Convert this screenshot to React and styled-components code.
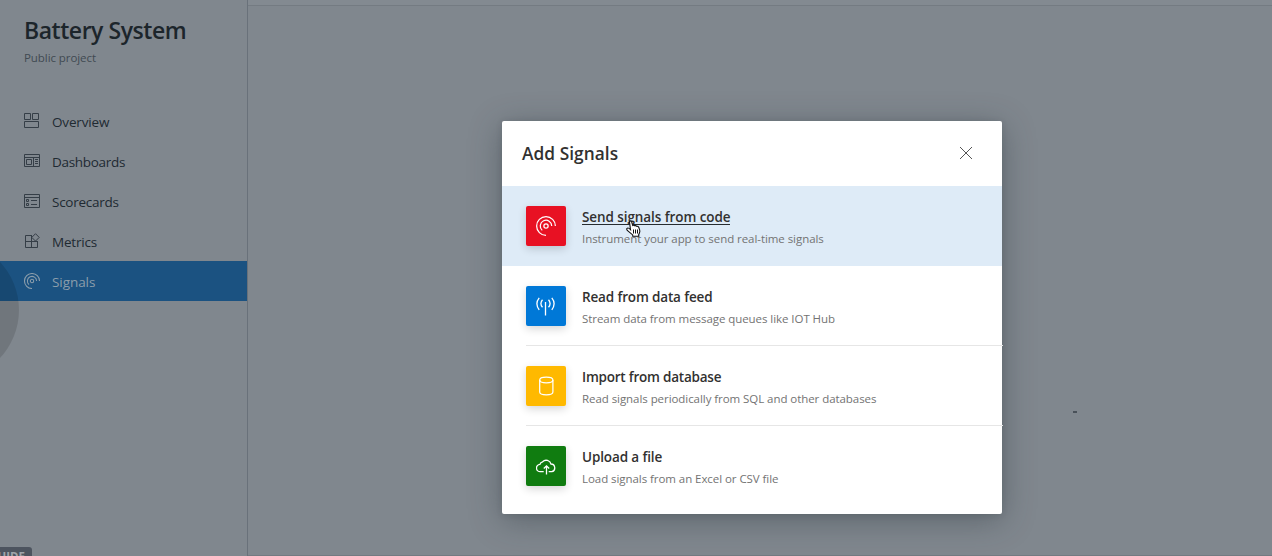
import React from 'react';
import styled, { createGlobalStyle, css } from 'styled-components';

const GlobalStyle = createGlobalStyle`
  * { box-sizing: border-box; }
  body {
    margin: 0;
    overflow: hidden;
    font-family: "Open Sans", "Noto Sans", sans-serif;
  }
`;

const Page = styled.div`
  position: relative;
  display: flex;
  width: 100vw;
  height: 556px;
  overflow: hidden;
  background: #80878e;
`;

const Sidebar = styled.aside`
  position: relative;
  display: flex;
  flex-direction: column;
  flex: 0 0 248px;
  border-right: 1px solid #69717a;
  overflow: hidden;
`;

const ProjectHeader = styled.header`
  height: 101px;
  padding: 15px 24px 0;
`;

const ProjectName = styled.h1`
  margin: 0;
  font-size: 23px;
  line-height: 30px;
  font-weight: 600;
  letter-spacing: -0.46px;
  color: #1c252b;
  white-space: nowrap;
`;

const ProjectKind = styled.p`
  margin: 5px 0 0;
  font-size: 11.5px;
  line-height: 16px;
  letter-spacing: -0.07px;
  color: #414a52;
`;

const NavItem = styled.a`
  display: flex;
  align-items: center;
  gap: 12px;
  height: 40px;
  padding: 0 24px;
  font-size: 13.5px;
  letter-spacing: ${(p) => p.$tracking || 0}px;
  color: ${(p) => (p.$active ? '#8b9dab' : '#202a32')};
  background: ${(p) => (p.$active ? '#1b5281' : 'transparent')};

  span { padding-top: 2px; }
  svg { color: ${(p) => (p.$active ? '#8b9dab' : '#353e47')}; }
`;

const Ripple = styled.div`
  position: absolute;
  left: -121px;
  top: 240px;
  width: 140px;
  height: 140px;
  border-radius: 50%;
  background: rgba(0, 0, 0, 0.12);
`;

const GuideTag = styled.div`
  position: absolute;
  left: -16px;
  top: 547px;
  width: 48px;
  height: 20px;
  padding-right: 7px;
  border-radius: 3px;
  background: #4d545f;
  color: #9fa4aa;
  font: 700 11.5px/19px "Open Sans", sans-serif;
  text-align: right;
`;

const Main = styled.main`
  flex: 1;
  border-bottom: 1px solid #737a81;
`;

const TopBar = styled.div`
  height: 6px;
  border-bottom: 1px solid #747b82;
  background: #838a91;
`;

const Dash = styled.div`
  position: absolute;
  left: 1073px;
  top: 411px;
  width: 4px;
  height: 2px;
  background: #495159;
`;

const Modal = styled.section`
  position: absolute;
  left: 502px;
  top: 121px;
  display: flex;
  flex-direction: column;
  width: 500px;
  height: 393px;
  border-radius: 2px;
  background: #fff;
  box-shadow: 0 6px 32px rgba(40, 52, 60, 0.42), 0 1px 6px rgba(40, 52, 60, 0.14);
`;

const ModalHeader = styled.header`
  display: flex;
  align-items: center;
  justify-content: space-between;
  height: 65px;
  padding: 0 29px 0 20px;
`;

const ModalTitle = styled.h2`
  margin: 1px 0 0;
  font-size: 17.3px;
  line-height: 24px;
  font-weight: 600;
  letter-spacing: 0.05px;
  color: #323130;
`;

const CloseButton = styled.button`
  display: flex;
  padding: 0;
  margin-bottom: 1px;
  border: 0;
  background: none;
  color: #555;
`;

const Option = styled.div`
  display: flex;
  height: 80px;
  padding-left: 24px;
  background: ${(p) => (p.$active ? '#deebf7' : 'transparent')};
`;

const OptionBody = styled.div`
  display: flex;
  flex: 1;
  gap: 16px;
  padding-top: 20px;
  margin-right: ${(p) => (p.$divided ? '-1px' : 0)};
  ${(p) => p.$divided && css`border-bottom: 1px solid #e6e6e6;`}
`;

const Tile = styled.div`
  display: flex;
  align-items: center;
  justify-content: center;
  width: 40px;
  height: 40px;
  border-radius: 2px;
  color: #fff;
  background: ${(p) => p.$color};
  box-shadow: 0 3px 8px rgba(0, 0, 0, 0.16);
`;

const OptionTitle = styled.div`
  width: max-content;
  height: 18px;
  margin-top: 1px;
  font-size: 13.5px;
  line-height: 20px;
  font-weight: 600;
  letter-spacing: ${(p) => p.$tracking}px;
  color: #323130;
  border-bottom: 1px solid ${(p) => (p.$active ? '#262c30' : 'transparent')};
`;

const OptionNote = styled.div`
  margin-top: 6px;
  font-size: 11.5px;
  line-height: 16px;
  letter-spacing: -0.06px;
  color: #737373;
`;

const Pointer = styled.svg`
  position: absolute;
  left: 626px;
  top: 219px;
`;

const Svg = ({ size = 16, children, width = 1 }) => (
  <svg width={size} height={size} viewBox={`0 0 ${size} ${size}`} fill="none" stroke="currentColor" strokeWidth={width}>
    {children}
  </svg>
);

const OverviewIcon = () => (
  <Svg><path d="M.5 .5h6v6h-6zM8.5 .5h6v6h-6zM.5 8.5h14v6H.5z" /></Svg>
);
const DashboardIcon = () => (
  <Svg><path d="M.5 1.5h15v12H.5zM.5 4.5h15M2.5 6.5h5v5h-5zM9.5 4.5v9M11 6.5h3M11 8.5h3M11 10.5h3" /></Svg>
);
const ScorecardIcon = () => (
  <Svg><path d="M.5 1.5h15v13H.5zM.5 4.5h15M2.5 6.5h2v2h-2zM2.5 10.5h2v2h-2zM7 7.5h6M7 11.5h6" /></Svg>
);
const MetricsIcon = () => (
  <Svg><path d="M8 2.5H1.5v12h12V8M7.5 2.5v12M1.5 8.5h12M11.5 .7l3.7 3.7-3.7 3.7-3.7-3.7z" /></Svg>
);
const SignalIcon = ({ size = 16 }) => (
  <svg width={size} height={size} viewBox="0 0 16 16" fill="none" stroke="currentColor" strokeWidth={size > 16 ? 1 : 1.05}>
    <circle cx="8" cy="8" r="1.7" />
    <path d="M15.5 8A7.5 7.5 0 1 0 8 15.5" />
    <path d="M12.6 8A4.6 4.6 0 1 0 5 11.5" />
  </svg>
);
const FeedIcon = () => (
  <Svg size={20} width={1.3}>
    <path d="M9.500 6v13.5M6.500 3.800q-3.200 3.700 0 7.400M12.500 3.800q3.200 3.700 0 7.400M3.200 1.800q-4.600 5.700 0 12M15.800 1.800q4.600 5.700 0 12" />
  </Svg>
);
const DatabaseIcon = () => (
  <Svg size={20} width={1.25}>
    <ellipse cx="10.3" cy="4" rx="6.6" ry="2.8" />
    <path d="M3.7 4v12c0 1.6 2.9 2.8 6.6 2.8s6.6-1.2 6.6-2.8V4" />
  </Svg>
);
const CloudIcon = () => (
  <Svg size={20} width={1.3}>
    <path d="M7.7 15.700H4.500a3.700 3.700 0 0 1-.6-7.400A3.500 3.500 0 0 1 6.600 5.800a5 5 0 0 1 8.400 2.200 3.900 3.900 0 0 1 .7 7.700h-3M10.500 18.500V9.800M7.800 12.500l2.700-2.700 2.700 2.700" />
  </Svg>
);

const NAV = [
  { label: 'Overview', icon: OverviewIcon, tracking: -0.16 },
  { label: 'Dashboards', icon: DashboardIcon, tracking: -0.3 },
  { label: 'Scorecards', icon: ScorecardIcon, tracking: -0.26 },
  { label: 'Metrics', icon: MetricsIcon, tracking: -0.18 },
  { label: 'Signals', icon: SignalIcon, tracking: -0.06 },
].map((item) => ({ ...item, active: item.label === 'Signals' }));

const OPTIONS = [
  { title: 'Send signals from code', note: 'Instrument your app to send real-time signals', color: '#e81123', icon: <SignalIcon size={20} />, tracking: -0.08, active: true },
  { title: 'Read from data feed', note: 'Stream data from message queues like IOT Hub', color: '#0078d7', icon: <FeedIcon />, tracking: -0.15, divided: true },
  { title: 'Import from database', note: 'Read signals periodically from SQL and other databases', color: '#ffb900', icon: <DatabaseIcon />, tracking: -0.22, divided: true },
  { title: 'Upload a file', note: 'Load signals from an Excel or CSV file', color: '#107c10', icon: <CloudIcon />, tracking: -0.12 },
];

export default function App() {
  return (
    <Page>
      <GlobalStyle />
      <Sidebar>
        <ProjectHeader>
          <ProjectName>Battery System</ProjectName>
          <ProjectKind>Public project</ProjectKind>
        </ProjectHeader>
        <nav>
          {NAV.map(({ label, icon: Icon, tracking, active }) => (
            <NavItem key={label} $active={active} $tracking={tracking}>
              <Icon />
              <span>{label}</span>
            </NavItem>
          ))}
        </nav>
        <Ripple />
        <GuideTag>GUIDE</GuideTag>
      </Sidebar>
      <Main>
        <TopBar />
        <Dash />
      </Main>
      <Modal>
        <ModalHeader>
          <ModalTitle>Add Signals</ModalTitle>
          <CloseButton aria-label="Close">
            <Svg size={14}><path d="M1 1l12 12M13 1L1 13" /></Svg>
          </CloseButton>
        </ModalHeader>
        {OPTIONS.map((o) => (
          <Option key={o.title} $active={o.active}>
            <OptionBody $divided={o.divided}>
              <Tile $color={o.color}>{o.icon}</Tile>
              <div>
                <OptionTitle $active={o.active} $tracking={o.tracking}>{o.title}</OptionTitle>
                <OptionNote>{o.note}</OptionNote>
              </div>
            </OptionBody>
          </Option>
        ))}
      </Modal>
      <Pointer width="16" height="18" viewBox="0 0 16 18">
        <path
          d="M3.500 3.100q0-1.100 1-1.100t1.200 1.100l1 3.400q1.200-.8 2 .3 1.200-.5 1.800.5 1.600-.3 2.200.9l1 3q.4 1.600-.3 2.800l-.7 1.700v1.500H6.700v-1.300L1.300 11.500Q.1 9.700 1.300 9.200q1.200-.6 3.200 1.500z"
          fill="#fff" stroke="#111" strokeWidth="1.1"
        />
        <path d="M7.500 10.500v4M9.500 10.500v4M11.500 10.500v4" stroke="#111" fill="none" />
      </Pointer>
    </Page>
  );
}
